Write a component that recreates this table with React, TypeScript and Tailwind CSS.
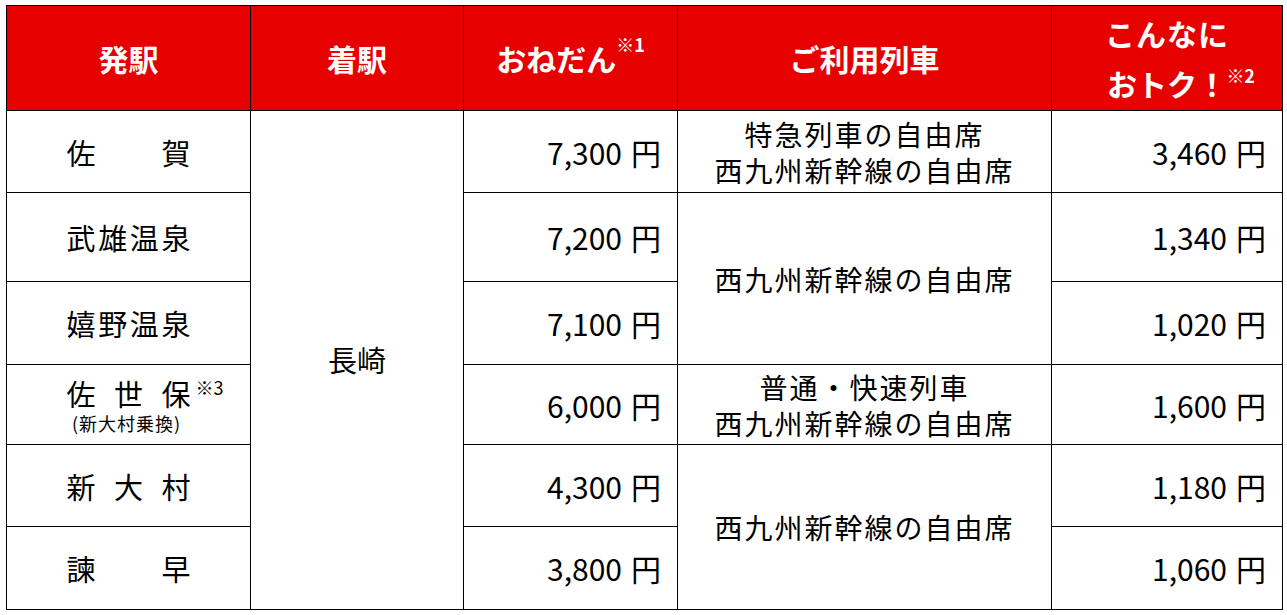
const fares = [
  { from: ['佐', '賀'], price: '7,300', save: '3,460' },
  { from: ['武', '雄', '温', '泉'], price: '7,200', save: '1,340' },
  { from: ['嬉', '野', '温', '泉'], price: '7,100', save: '1,020' },
  { from: ['佐', '世', '保'], note: '※3', sub: '(新大村乗換)', price: '6,000', save: '1,600' },
  { from: ['新', '大', '村'], price: '4,300', save: '1,180' },
  { from: ['諫', '早'], price: '3,800', save: '1,060' },
];

const rowStart = ['row-start-2', 'row-start-3', 'row-start-4', 'row-start-5', 'row-start-6', 'row-start-7'];

function Yen({ value }: { value: string }) {
  return (
    <span className="text-[30px] leading-none">
      {value}
      <span className="ml-[9px]">円</span>
    </span>
  );
}

function Station({ chars, note, sub }: { chars: string[]; note?: string; sub?: string }) {
  return (
    <div className="flex flex-col items-center">
      <div className="relative flex w-[124px] justify-between text-[29px] leading-[34px]">
        {chars.map((c, i) => (
          <span key={i}>{c}</span>
        ))}
        {note && <span className="absolute left-[129px] top-[-6px] text-[18px]">{note}</span>}
      </div>
      {sub && <div className="mt-[3px] -ml-[4px] text-[18px] leading-[20px] tracking-[1px]">{sub}</div>}
    </div>
  );
}

export default function App() {
  const head = 'flex items-center justify-center bg-[#e60000] text-white font-bold text-[30px]';
  const cell = 'flex items-center bg-white text-black';
  return (
    <div className="min-h-[615px] bg-white pt-[5px] pl-[6px] font-['Noto_Sans_CJK_JP','Noto_Sans',sans-serif]">
      <div className="grid w-[1277px] grid-cols-[243px_212px_213px_373px_230px] grid-rows-[104px_81px_88px_82px_79px_81px_82px] gap-px bg-black p-px">
        <div className={`${head} col-start-1 row-start-1`}>発駅</div>
        <div className={`${head} col-start-2 row-start-1`}>着駅</div>
        <div className={`${head} col-start-3 row-start-1`}>
          <span className="flex items-start">
            おねだん
            <span className="mt-[-4px] text-[18px] leading-[24px]">※1</span>
          </span>
        </div>
        <div className={`${head} col-start-4 row-start-1`}>ご利用列車</div>
        <div className={`${head} col-start-5 row-start-1 flex-col leading-[50px]`}>
          <span className="tracking-[1px]">こんなに</span>
          <span className="relative">
            おトク！
            <span className="absolute -right-[28px] top-[-8px] text-[18px]">※2</span>
          </span>
        </div>

        {fares.map((f, i) => (
          <div key={`s${i}`} className={`${cell} col-start-1 ${rowStart[i]} justify-center`}>
            <Station chars={f.from} note={f.note} sub={f.sub} />
          </div>
        ))}

        <div className={`${cell} col-start-2 row-start-2 row-span-6 justify-center text-[29px]`}>長崎</div>

        {fares.map((f, i) => (
          <div key={`p${i}`} className={`${cell} col-start-3 ${rowStart[i]} justify-end pr-[16px]`}>
            <Yen value={f.price} />
          </div>
        ))}

        <div className={`${cell} col-start-4 row-start-2 justify-center text-center text-[28px] leading-[36px] tracking-[2px]`}>
          <p>
            特急列車の自由席
            <br />
            西九州新幹線の自由席
          </p>
        </div>
        <div className={`${cell} col-start-4 row-start-3 row-span-2 justify-center text-[28px] tracking-[2px]`}>
          西九州新幹線の自由席
        </div>
        <div className={`${cell} col-start-4 row-start-5 justify-center text-center text-[28px] leading-[36px] tracking-[2px]`}>
          <p>
            普通・快速列車
            <br />
            西九州新幹線の自由席
          </p>
        </div>
        <div className={`${cell} col-start-4 row-start-6 row-span-2 justify-center text-[28px] tracking-[2px]`}>
          西九州新幹線の自由席
        </div>

        {fares.map((f, i) => (
          <div key={`v${i}`} className={`${cell} col-start-5 ${rowStart[i]} justify-end pr-[16px]`}>
            <Yen value={f.save} />
          </div>
        ))}
      </div>
    </div>
  );
}
